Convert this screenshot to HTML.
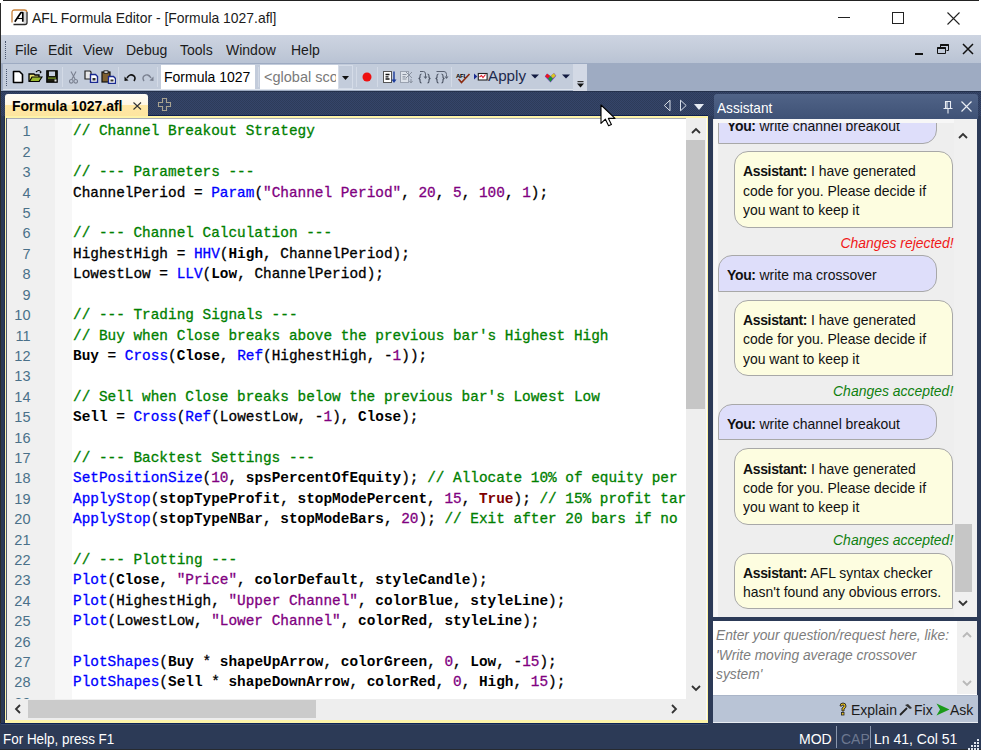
<!DOCTYPE html>
<html><head><meta charset="utf-8">
<style>
*{margin:0;padding:0;box-sizing:border-box}
html,body{width:981px;height:750px;overflow:hidden;background:#2c3a57;font-family:"Liberation Sans",sans-serif;font-size:14px;color:#1e1e1e}
.a{position:absolute}
#title{left:0;top:0;width:981px;height:35px;background:#fff}
#menu{left:1px;top:35px;width:980px;height:28px;background:linear-gradient(#cdd4e1,#c4ccda 50%,#b9c3d4)}
#tbband{left:1px;top:63px;width:980px;height:28px;background:#9eabc2}
#toolbar{left:3px;top:64px;width:584px;height:26px;background:#c3ccdb;border-bottom:1px solid #dde3ec}
#navytop{left:1px;top:91px;width:980px;height:25px;background-color:#2d3b59;
 background-image:conic-gradient(#35456a 25%,transparent 0 50%,#35456a 0 75%,transparent 0);background-size:2px 2px}
.mi{position:absolute;top:42px;font-size:14px;color:#1b1b1b;white-space:pre}
#tab{left:5px;top:94px;width:143px;height:23px;border-radius:3px 3px 0 0;background:linear-gradient(#fffdf6,#fff7e4 47%,#ffe7a3 49%,#fde5a0)}
#tabtxt{left:12px;top:98px;font-weight:bold;font-size:14px;color:#000;white-space:pre}
#frame{left:5px;top:116px;width:703px;height:607px;background:#fdf3a8}
#frameline{left:148px;top:115px;width:560px;height:1px;background:#0f2050}
#editor{left:7px;top:118px;width:699px;height:602px;background:#fff;overflow:hidden}
#gutter{left:0;top:0;width:48px;height:581px;background:#f0f0f0}
#margin{left:48px;top:0;width:17px;height:581px;background:#f7f7f7}
.ln{position:absolute;left:66px;font-family:"Liberation Mono",monospace;font-size:14.4px;white-space:pre;color:#000;line-height:20px;-webkit-text-stroke:0.3px currentColor}
.num{position:absolute;left:0;width:23.5px;text-align:right;font-size:14.5px;color:#4a7089;line-height:20px}
i{font-style:normal}
.sg{display:block;font-size:15px;transform:scaleX(0.93);transform-origin:0 0}
.sgr{display:block;font-size:15px;transform:scaleX(0.93);transform-origin:100% 0}
.bub b{letter-spacing:-0.35px}
#chatclip{left:0;top:4px;width:240.6px;height:493px;overflow:hidden}
i.c{color:#008000}
i.s{color:#800080}
i.n{color:#800080}
i.f{color:#0000ff}
i.b{font-weight:bold;-webkit-text-stroke:0}
i.t{font-weight:bold;color:#800000;-webkit-text-stroke:0}
#vscroll{left:679px;top:0;width:20px;height:581px;background:#eeeeee}
#vthumb{left:679px;top:22px;width:19px;height:269px;background:#c6c6c6}
#hscroll{left:0;top:581px;width:679px;height:21px;background:#eeeeee}
#hthumb{left:21px;top:582px;width:288px;height:18px;background:#cbcbcb}
#corner{left:679px;top:581px;width:20px;height:21px;background:#eeeeee}
#apanel{left:713.5px;top:94px;width:264.5px;height:25px;border-radius:3px 3px 0 0;background:linear-gradient(#506387,#3f5276)}
#chat{left:713px;top:119px;width:264px;height:498px;background:#eeeeee;overflow:hidden}
.bub{position:absolute;border:1px solid #a8a8a8;font-size:14px;color:#111;line-height:19.3px;white-space:pre}
.you{left:5px;width:219px;background:#dedefa;border-radius:14px 14px 14px 0;padding:8.7px 0 0 8px}
.ast{left:21px;width:219px;background:#fdfde0;border-radius:14px 14px 0 14px;padding:9.4px 0 0 8px}
.st{position:absolute;right:-0.5px;font-style:italic;font-size:14px}
#cscroll{left:240.6px;top:0;width:24px;height:498px;background:#f0f0f0}
#input{left:713px;top:621px;width:264px;height:74px;background:#fff}
#inscroll{left:244px;top:0;width:20px;height:73px;background:#f0f0f0}
#btnbar{left:713px;top:695px;width:265px;height:28px;background:#b9c4d6;border-bottom:1px solid #e8ecf2;border-top:1px solid #aab5c8}
#status{left:0;top:723px;width:981px;height:27px;background:#2c3a56}
.wt{color:#fff;white-space:pre}
</style></head><body>
<div id="title" class="a"></div>
<div class="a" style="left:3px;top:0;width:976px;height:1px;background:#222"></div>
<div class="a" style="left:0;top:3px;width:1px;height:747px;background:#2a2a2a"></div>
<!-- app icon -->
<svg class="a" style="left:11px;top:9px" width="17" height="17" viewBox="0 0 17 17">
 <rect x="1" y="1" width="15" height="15" rx="2.5" fill="#fff"/>
 <rect x="12.5" y="2.5" width="2.5" height="12" fill="#d8d8d8"/>
 <path d="M2.5 15.5h11.5q2 0 2-2V3" fill="none" stroke="#2a2a2a" stroke-width="1.3"/>
 <path d="M1 13.5V3.5q0-2.5 2.5-2.5h10q2 0 2.5 2" fill="none" stroke="#c8823c" stroke-width="1.3"/>
 <path d="M3.8 12.8L10 3.5h1.8v9.3" fill="none" stroke="#000" stroke-width="1.7" stroke-linejoin="round"/>
 <path d="M6.5 9.5h5" stroke="#000" stroke-width="1.1"/>
</svg>
<div class="a wt" style="left:32px;top:9px;color:#1b1b1b;font-size:15px;transform:scaleX(0.927);transform-origin:0 0">AFL Formula Editor - [Formula 1027.afl]</div>
<!-- window controls -->
<div class="a" style="left:838px;top:17px;width:12px;height:1px;background:#222"></div>
<div class="a" style="left:892px;top:12px;width:12px;height:12px;border:1px solid #222"></div>
<svg class="a" style="left:947px;top:12px" width="13" height="13" viewBox="0 0 13 13"><path d="M0.5 0.5L12.5 12.5M12.5 0.5L0.5 12.5" stroke="#222" stroke-width="1.1"/></svg>

<div id="menu" class="a"></div>
<div class="a" style="left:5px;top:41px;width:1px;height:18px;border-left:1px dotted #4a5670"></div>
<div class="mi" style="left:15px">File</div>
<div class="mi" style="left:48px">Edit</div>
<div class="mi" style="left:83px">View</div>
<div class="mi" style="left:126px">Debug</div>
<div class="mi" style="left:180px">Tools</div>
<div class="mi" style="left:226px">Window</div>
<div class="mi" style="left:291px">Help</div>
<!-- mdi controls -->
<div class="a" style="left:915px;top:53px;width:8px;height:2px;background:#111"></div>
<svg class="a" style="left:937px;top:44px" width="12" height="10" viewBox="0 0 12 10"><path d="M3.5 0.5h8v6h-2M0.5 3.5h8v6h-8z M3.5 0.5v3" fill="none" stroke="#111" stroke-width="1"/><path d="M0.5 4h8" stroke="#111" stroke-width="2"/><path d="M3.5 1h8" stroke="#111" stroke-width="2"/></svg>
<svg class="a" style="left:962px;top:43px" width="12" height="12" viewBox="0 0 12 12"><path d="M1 1L11 11M11 1L1 11" stroke="#111" stroke-width="1.5"/></svg>

<div id="tbband" class="a"></div>
<div id="toolbar" class="a"></div>
<div class="a" style="left:6px;top:69px;width:1px;height:17px;border-left:1px dotted #4a5670"></div>

<svg class="a" style="left:12px;top:70px" width="12" height="14" viewBox="0 0 12 14"><path d="M1.5 1.5h6l3 3v8h-9z" fill="#fff" stroke="#000" stroke-width="1.6" stroke-linejoin="round"/></svg>
<svg class="a" style="left:28px;top:69px" width="15" height="14" viewBox="0 0 15 14"><path d="M1 5h5l1 1h4v6H1z" fill="#e8e070" stroke="#000" stroke-width="1.3"/><path d="M1.5 12.5L4 8h10l-3 4.5z" fill="#9ab830" stroke="#000" stroke-width="1.2"/><path d="M8 3q3-3 5 0l-1 1" fill="none" stroke="#000" stroke-width="1.2"/></svg>
<svg class="a" style="left:46px;top:70px" width="12" height="13" viewBox="0 0 12 13"><rect x="0.8" y="0.8" width="10.4" height="11.4" fill="#1c1c10" stroke="#000" stroke-width="1.2"/><rect x="3" y="1.5" width="6" height="4.5" fill="#c8d0e0"/><rect x="2" y="7.5" width="8" height="1.2" fill="#7a9a20"/><rect x="8.5" y="9.5" width="2" height="2" fill="#ddd"/></svg>
<div class="a" style="left:62px;top:67px;width:1px;height:20px;background:#8d9ab0;border-right:1px solid #d3dae6"></div>
<svg class="a" style="left:69px;top:71px" width="9" height="13" viewBox="0 0 9 13"><path d="M2 0.5L6 8M7 0.5L3 8" stroke="#7a8090" stroke-width="1.1" fill="none"/><circle cx="2.3" cy="10.3" r="1.8" fill="none" stroke="#7a8090" stroke-width="1.1"/><circle cx="6.7" cy="10.3" r="1.8" fill="none" stroke="#7a8090" stroke-width="1.1"/></svg>
<svg class="a" style="left:84px;top:70px" width="15" height="13" viewBox="0 0 15 13"><path d="M1 1h5l1 1v7H1z" fill="#e8e8e8" stroke="#222" stroke-width="1.2"/><path d="M6.5 4.5h5l2 2v6h-7z" fill="#fff" stroke="#1a2a90" stroke-width="1.4"/><rect x="8.5" y="8" width="3" height="2.5" fill="#333"/></svg>
<svg class="a" style="left:101px;top:70px" width="15" height="14" viewBox="0 0 15 14"><rect x="1" y="2" width="8" height="10" fill="#806030" stroke="#111" stroke-width="1.2"/><rect x="3" y="0.8" width="4" height="2.5" fill="#ddd" stroke="#111" stroke-width="0.8"/><path d="M7.5 6.5h5l2 2v5h-7z" fill="#fff" stroke="#1a2a90" stroke-width="1.4"/><rect x="9.5" y="9.5" width="3" height="2" fill="#333"/></svg>
<div class="a" style="left:118px;top:67px;width:1px;height:20px;background:#8d9ab0;border-right:1px solid #d3dae6"></div>
<svg class="a" style="left:124px;top:73px" width="12" height="9" viewBox="0 0 12 9"><path d="M3 5q3-5 7-2q2 2 0 5" fill="none" stroke="#111" stroke-width="1.6"/><path d="M0.5 3.5L4.5 7.5L0.5 8z" fill="#111"/></svg>
<svg class="a" style="left:142px;top:73px" width="12" height="9" viewBox="0 0 12 9"><path d="M9 5q-3-5-7-2q-2 2 0 5" fill="none" stroke="#7a8090" stroke-width="1.4"/><path d="M11.5 3.5L7.5 7.5L11.5 8z" fill="#7a8090"/></svg>
<div class="a" style="left:157px;top:67px;width:1px;height:20px;background:#8d9ab0;border-right:1px solid #d3dae6"></div>
<div class="a" style="left:161px;top:65px;width:94px;height:24px;background:#fff"></div>
<div class="a" style="left:164px;top:69px;font-size:14px;color:#000;white-space:pre">Formula 1027</div>
<div class="a" style="left:258px;top:67px;width:1px;height:20px;background:#8d9ab0;border-right:1px solid #d3dae6"></div>
<div class="a" style="left:260px;top:65px;width:93px;height:24px;background:#fff"></div><div class="a" style="left:260px;top:65px;width:76px;height:24px;overflow:hidden"><div class="a" style="left:4px;top:4px;font-size:14.5px;color:#7a7a7a;white-space:pre">&lt;global scope&gt;</div></div>
<div class="a" style="left:338px;top:65px;width:15px;height:24px;background:#c3ccdb;border:1px solid #d5dce8"></div>
<svg class="a" style="left:341.5px;top:75.5px" width="7" height="4" viewBox="0 0 7 4"><path d="M0 0h7L3.5 4z" fill="#111"/></svg>
<div class="a" style="left:356px;top:67px;width:1px;height:20px;background:#8d9ab0;border-right:1px solid #d3dae6"></div>
<svg class="a" style="left:362px;top:72px" width="10" height="10" viewBox="0 0 10 10"><circle cx="5" cy="5" r="4.5" fill="#ee1010"/></svg>
<div class="a" style="left:377px;top:67px;width:1px;height:20px;background:#8d9ab0;border-right:1px solid #d3dae6"></div>
<svg class="a" style="left:382px;top:70px" width="15" height="14" viewBox="0 0 15 14"><rect x="1.5" y="1.5" width="8" height="11" fill="#fff" stroke="#555" stroke-width="1"/><path d="M3.5 4.5h4M3.5 6.8h3M3.5 9h4" stroke="#111" stroke-width="1.3"/><path d="M12 1.5v9" stroke="#1a3a9a" stroke-width="1.4"/><path d="M9.5 9.5h5L12 13z" fill="#1a3a9a"/></svg>
<svg class="a" style="left:399px;top:70px" width="15" height="14" viewBox="0 0 15 14"><rect x="1.5" y="1.5" width="8" height="11" fill="#dde2ea" stroke="#9aa2b0" stroke-width="1"/><path d="M3.5 4.5h4M3.5 6.8h3M3.5 9h4" stroke="#8a92a0" stroke-width="1.2"/><path d="M7 2l6 6M13 2L7 8M12 9v3M10.5 11l1.5 2l1.5-2" stroke="#8a92a0" stroke-width="1" fill="none"/></svg>
<svg class="a" style="left:418px;top:70px" width="13" height="14" viewBox="0 0 13 14"><path d="M3.5 4q-1.5 0-1.5 2v1.5l-1 1l1 1v1.5q0 2 1.5 2M9.5 4q1.5 0 1.5 2v1.5l1 1l-1 1v1.5q0 2-1.5 2" fill="none" stroke="#4a5262" stroke-width="1.1"/><path d="M2 1.5h3.5q2 0 2 2.5v3" fill="none" stroke="#5a6272" stroke-width="1"/><path d="M5.5 6.5h4l-2 2.5z" fill="#5a6272"/></svg>
<svg class="a" style="left:435px;top:70px" width="14" height="14" viewBox="0 0 14 14"><path d="M3.5 4q-1.5 0-1.5 2v1.5l-1 1l1 1v1.5q0 2 1.5 2M6.5 4q1.5 0 1.5 2v1.5l1 1l-1 1v1.5q0 2-1.5 2" fill="none" stroke="#4a5262" stroke-width="1.1"/><path d="M1.5 1.5h7.5q2.5 0 2.5 3v2" fill="none" stroke="#5a6272" stroke-width="1"/><path d="M9.5 6.5h4l-2 2.5z" fill="#5a6272"/></svg>
<div class="a" style="left:451px;top:67px;width:1px;height:20px;background:#8d9ab0;border-right:1px solid #d3dae6"></div>
<svg class="a" style="left:455px;top:71px" width="16" height="13" viewBox="0 0 16 13"><text x="1" y="6.5" font-family="Liberation Sans" font-size="6" font-weight="bold" fill="#000" letter-spacing="-0.3">AFL</text><path d="M3.5 8l3 3.5l8-8.5" fill="none" stroke="#8b2a10" stroke-width="1.6"/></svg>
<svg class="a" style="left:473px;top:72px" width="15" height="9" viewBox="0 0 15 9"><path d="M1 1.5L4.3 4.5L1 7.5z" fill="#1a2a90"/><rect x="5.3" y="1.5" width="8.8" height="6.5" fill="#fff" stroke="#222" stroke-width="1.1"/><path d="M6.5 5l2-1.5l1.5 2l2.5-3" fill="none" stroke="#e02030" stroke-width="1.1"/></svg>
<div class="a" style="left:488px;top:67px;font-size:15.2px;color:#1e2a4e;white-space:pre">Apply</div>
<svg class="a" style="left:531px;top:74px" width="8" height="5" viewBox="0 0 8 5"><path d="M0 0.5h8L4 4.5z" fill="#111a40"/></svg>
<svg class="a" style="left:544px;top:72px" width="13" height="11" viewBox="0 0 13 11"><path d="M6.5 10.5L0.8 4.5L3 1.5L6.5 4L10 1L12.3 3.8z" fill="#7040c0"/><path d="M1.2 4.3L3.2 1.8L6 4L4 6.5z" fill="#ee1818"/><path d="M6.8 3.8L9.8 1.3L11.8 3.7L8.8 6.3z" fill="#d8c820"/><path d="M4.3 6.8L8.5 6.6L6.5 9.8z" fill="#20a030"/><path d="M4.2 6.6L6.3 4.3L8.6 6.4L6.5 9.5z" fill="#1a9a2a"/></svg>
<svg class="a" style="left:562px;top:74px" width="8" height="5" viewBox="0 0 8 5"><path d="M0 0.5h8L4 4.5z" fill="#111a40"/></svg>
<div class="a" style="left:573px;top:64px;width:14px;height:27px;background:#d3d9e5"></div>
<svg class="a" style="left:577px;top:81px" width="7" height="7" viewBox="0 0 7 7"><rect x="0.5" y="0" width="6" height="1.2" fill="#333"/><path d="M0 2.5h7L3.5 6.5z" fill="#111"/></svg>


<div id="navytop" class="a"></div>
<div class="a" style="left:1px;top:91px;width:980px;height:1px;background:#24314c"></div>
<div class="a" style="left:1px;top:116px;width:712px;height:607px;background:#2c3a57"></div>
<div class="a" style="left:4px;top:116px;width:1px;height:607px;background:#1e2b48"></div>

<div id="tab" class="a"></div>
<div id="tabtxt" class="a">Formula 1027.afl</div>
<svg class="a" style="left:133px;top:102px" width="9" height="8" viewBox="0 0 9 8"><path d="M0.5 0.5L8 7.5M8 0.5L0.5 7.5" stroke="#333" stroke-width="1.1"/></svg>
<svg class="a" style="left:157px;top:97px" width="15" height="15" viewBox="0 0 15 15"><path d="M5.5 1.5h4v4h4v4h-4v4h-4v-4h-4v-4h4z" fill="none" stroke="#a8a290" stroke-width="1.1"/></svg>
<svg class="a" style="left:663px;top:99px" width="44" height="13" viewBox="0 0 44 13">
 <path d="M7 1.2L1.3 6.5L7 11.8Z" fill="none" stroke="#d9e0ea" stroke-width="1"/>
 <path d="M17.5 1.2L23.2 6.5L17.5 11.8Z" fill="none" stroke="#d9e0ea" stroke-width="1"/>
 <path d="M31 5h10L36 11Z" fill="#e6ebf3"/>
</svg>

<div id="frameline" class="a"></div>
<div id="frame" class="a"></div>
<div class="a" style="left:6px;top:118px;width:1px;height:602px;background:#4e5870"></div>
<div class="a" style="left:706px;top:118px;width:1px;height:602px;background:#fafafc"></div>
<div id="editor" class="a">
 <div id="gutter" class="a"></div>
 <div id="margin" class="a"></div>
 <div class="a" style="left:0;top:0;width:699px;height:1px;background:#a9aeb8"></div>
<div class="ln" style="top:3.40px"><i class="c">// Channel Breakout Strategy</i></div>
<div class="num" style="top:3.40px">1</div>
<div class="ln" style="top:23.81px"></div>
<div class="num" style="top:23.81px">2</div>
<div class="ln" style="top:44.22px"><i class="c">// --- Parameters ---</i></div>
<div class="num" style="top:44.22px">3</div>
<div class="ln" style="top:64.63px">ChannelPeriod = <i class="f">Param</i>(<i class="s">&quot;Channel Period&quot;</i>, <i class="n">20</i>, <i class="n">5</i>, <i class="n">100</i>, <i class="n">1</i>);</div>
<div class="num" style="top:64.63px">4</div>
<div class="ln" style="top:85.04px"></div>
<div class="num" style="top:85.04px">5</div>
<div class="ln" style="top:105.45px"><i class="c">// --- Channel Calculation ---</i></div>
<div class="num" style="top:105.45px">6</div>
<div class="ln" style="top:125.86px">HighestHigh = <i class="f">HHV</i>(<i class="b">High</i>, ChannelPeriod);</div>
<div class="num" style="top:125.86px">7</div>
<div class="ln" style="top:146.27px">LowestLow = <i class="f">LLV</i>(<i class="b">Low</i>, ChannelPeriod);</div>
<div class="num" style="top:146.27px">8</div>
<div class="ln" style="top:166.68px"></div>
<div class="num" style="top:166.68px">9</div>
<div class="ln" style="top:187.09px"><i class="c">// --- Trading Signals ---</i></div>
<div class="num" style="top:187.09px">10</div>
<div class="ln" style="top:207.50px"><i class="c">// Buy when Close breaks above the previous bar&#x27;s Highest High</i></div>
<div class="num" style="top:207.50px">11</div>
<div class="ln" style="top:227.91px"><i class="b">Buy</i> = <i class="f">Cross</i>(<i class="b">Close</i>, <i class="f">Ref</i>(HighestHigh, -<i class="n">1</i>));</div>
<div class="num" style="top:227.91px">12</div>
<div class="ln" style="top:248.32px"></div>
<div class="num" style="top:248.32px">13</div>
<div class="ln" style="top:268.73px"><i class="c">// Sell when Close breaks below the previous bar&#x27;s Lowest Low</i></div>
<div class="num" style="top:268.73px">14</div>
<div class="ln" style="top:289.14px"><i class="b">Sell</i> = <i class="f">Cross</i>(<i class="f">Ref</i>(LowestLow, -<i class="n">1</i>), <i class="b">Close</i>);</div>
<div class="num" style="top:289.14px">15</div>
<div class="ln" style="top:309.55px"></div>
<div class="num" style="top:309.55px">16</div>
<div class="ln" style="top:329.96px"><i class="c">// --- Backtest Settings ---</i></div>
<div class="num" style="top:329.96px">17</div>
<div class="ln" style="top:350.37px"><i class="f">SetPositionSize</i>(<i class="n">10</i>, <i class="b">spsPercentOfEquity</i>); <i class="c">// Allocate 10% of equity per</i></div>
<div class="num" style="top:350.37px">18</div>
<div class="ln" style="top:370.78px"><i class="f">ApplyStop</i>(<i class="b">stopTypeProfit</i>, <i class="b">stopModePercent</i>, <i class="n">15</i>, <i class="t">True</i>); <i class="c">// 15% profit tar</i></div>
<div class="num" style="top:370.78px">19</div>
<div class="ln" style="top:391.19px"><i class="f">ApplyStop</i>(<i class="b">stopTypeNBar</i>, <i class="b">stopModeBars</i>, <i class="n">20</i>); <i class="c">// Exit after 20 bars if no</i></div>
<div class="num" style="top:391.19px">20</div>
<div class="ln" style="top:411.60px"></div>
<div class="num" style="top:411.60px">21</div>
<div class="ln" style="top:432.01px"><i class="c">// --- Plotting ---</i></div>
<div class="num" style="top:432.01px">22</div>
<div class="ln" style="top:452.42px"><i class="f">Plot</i>(<i class="b">Close</i>, <i class="s">&quot;Price&quot;</i>, <i class="b">colorDefault</i>, <i class="b">styleCandle</i>);</div>
<div class="num" style="top:452.42px">23</div>
<div class="ln" style="top:472.83px"><i class="f">Plot</i>(HighestHigh, <i class="s">&quot;Upper Channel&quot;</i>, <i class="b">colorBlue</i>, <i class="b">styleLine</i>);</div>
<div class="num" style="top:472.83px">24</div>
<div class="ln" style="top:493.24px"><i class="f">Plot</i>(LowestLow, <i class="s">&quot;Lower Channel&quot;</i>, <i class="b">colorRed</i>, <i class="b">styleLine</i>);</div>
<div class="num" style="top:493.24px">25</div>
<div class="ln" style="top:513.65px"></div>
<div class="num" style="top:513.65px">26</div>
<div class="ln" style="top:534.06px"><i class="f">PlotShapes</i>(<i class="b">Buy</i> * <i class="b">shapeUpArrow</i>, <i class="b">colorGreen</i>, <i class="n">0</i>, <i class="b">Low</i>, -<i class="n">15</i>);</div>
<div class="num" style="top:534.06px">27</div>
<div class="ln" style="top:554.47px"><i class="f">PlotShapes</i>(<i class="b">Sell</i> * <i class="b">shapeDownArrow</i>, <i class="b">colorRed</i>, <i class="n">0</i>, <i class="b">High</i>, <i class="n">15</i>);</div>
<div class="num" style="top:554.47px">28</div>
<div class="ln" style="top:574.88px"></div>
<div class="num" style="top:574.88px">29</div>
 <div id="vscroll" class="a"></div>
 <div id="vthumb" class="a"></div>
 <svg class="a" style="left:684px;top:9px" width="10" height="7" viewBox="0 0 10 7"><path d="M1 6L5 2L9 6" fill="none" stroke="#333" stroke-width="1.8"/></svg>
 <svg class="a" style="left:684px;top:567px" width="10" height="7" viewBox="0 0 10 7"><path d="M1 1L5 5L9 1" fill="none" stroke="#333" stroke-width="1.8"/></svg>
 <div id="hscroll" class="a"></div>
 <div id="hthumb" class="a"></div>
 <svg class="a" style="left:7px;top:586px" width="7" height="10" viewBox="0 0 7 10"><path d="M6 1L2 5L6 9" fill="none" stroke="#333" stroke-width="1.8"/></svg>
 <svg class="a" style="left:664px;top:586px" width="7" height="10" viewBox="0 0 7 10"><path d="M1 1L5 5L1 9" fill="none" stroke="#333" stroke-width="1.8"/></svg>
 <div id="corner" class="a"></div>
</div>

<div id="apanel" class="a"></div>
<div class="a wt" style="left:717px;top:100px;font-size:14.5px;transform:scaleX(0.94);transform-origin:0 0">Assistant</div>
<svg class="a" style="left:943px;top:100px" width="10" height="14" viewBox="0 0 10 14"><path d="M2.5 1.5h5v7h-5zM0.5 8.5h9M5 8.5v5M4 1.5v7" fill="none" stroke="#e8ecf3" stroke-width="1.1"/></svg>
<svg class="a" style="left:961px;top:101px" width="11" height="11" viewBox="0 0 11 11"><path d="M0.5 0.5L10.5 10.5M10.5 0.5L0.5 10.5" stroke="#e8ecf3" stroke-width="1.2"/></svg>
<div id="chat" class="a">
<div id="chatclip" class="a"><div class="a" style="left:0;top:-4px;width:240px;height:497px">
<div class="bub you" style="top:-11px;height:36.3px;padding-top:7px"><span class="sg"><b>You:</b> write channel breakout</span></div>
<div class="bub ast" style="top:32.0px;height:76.8px"><span class="sg"><b>Assistant:</b> I have generated
code for you. Please decide if
you want to keep it</span></div>
<div class="st" style="top:113.6px;color:#f01818;line-height:19.5px"><span class="sgr">Changes rejected!</span></div>
<div class="bub you" style="top:136.3px;height:36.3px"><span class="sg"><b>You:</b> write ma crossover</span></div>
<div class="bub ast" style="top:180.6px;height:76.8px"><span class="sg"><b>Assistant:</b> I have generated
code for you. Please decide if
you want to keep it</span></div>
<div class="st" style="top:262.2px;color:#0f800f;line-height:19.5px"><span class="sgr">Changes accepted!</span></div>
<div class="bub you" style="top:284.9px;height:36.3px"><span class="sg"><b>You:</b> write channel breakout</span></div>
<div class="bub ast" style="top:329.2px;height:76.8px"><span class="sg"><b>Assistant:</b> I have generated
code for you. Please decide if
you want to keep it</span></div>
<div class="st" style="top:410.8px;color:#0f800f;line-height:19.5px"><span class="sgr">Changes accepted!</span></div>
<div class="bub ast" style="top:433.7px;height:56.6px"><span class="sg"><b>Assistant:</b> AFL syntax checker
hasn't found any obvious errors.</span></div>
</div></div>
<div id="cscroll" class="a"></div>
<div class="a" style="left:241.5px;top:405px;width:17.5px;height:67.5px;background:#c6c6c6"></div>
<svg class="a" style="left:245px;top:13px" width="10" height="7" viewBox="0 0 10 7"><path d="M1 6L5 2L9 6" fill="none" stroke="#333" stroke-width="1.8"/></svg>
<svg class="a" style="left:245px;top:481px" width="10" height="7" viewBox="0 0 10 7"><path d="M1 1L5 5L9 1" fill="none" stroke="#333" stroke-width="1.8"/></svg>
</div>

<div class="a" style="left:713.5px;top:119px;width:240px;height:3.5px;background:#f7f7f7"></div>
<div class="a" style="left:713.5px;top:119px;width:4px;height:498px;background:#f7f7f7"></div>
<div id="input" class="a">
 <div class="a" style="left:2.5px;top:5px;font-style:italic;color:#7d7d7d;line-height:19.7px;white-space:pre;font-size:14px;transform:scaleX(0.985);transform-origin:0 0">Enter your question/request here, like:
'Write moving average crossover
system'</div>
 <div id="inscroll" class="a"></div>
 <svg class="a" style="left:249px;top:10px" width="10" height="7" viewBox="0 0 10 7"><path d="M1 6L5 2L9 6" fill="none" stroke="#b8b8b8" stroke-width="1.9"/></svg>
 <svg class="a" style="left:249px;top:59px" width="10" height="7" viewBox="0 0 10 7"><path d="M1 1L5 5L9 1" fill="none" stroke="#b8b8b8" stroke-width="1.9"/></svg>
</div>
<div id="btnbar" class="a"></div>

<svg class="a" style="left:838px;top:702px" width="9" height="14" viewBox="0 0 9 14"><path d="M2 4q0-3 3-3t3 3q0 2-2 3v2h-2v-3q2-1 2-2t-1-1q-1 0-1 1z" fill="#e8c020" stroke="#222" stroke-width="0.9"/><rect x="3.5" y="10.5" width="2.5" height="2.5" fill="#e8c020" stroke="#222" stroke-width="0.8"/></svg>
<div class="a" style="left:851px;top:702px;font-size:14px;color:#1b1b1b;white-space:pre">Explain</div>
<svg class="a" style="left:899px;top:703px" width="14" height="13" viewBox="0 0 14 13"><path d="M1 12L8 5" stroke="#222" stroke-width="1.8"/><path d="M6 2l3-1l4 4l-2 1z" fill="#333"/></svg>
<div class="a" style="left:914px;top:702px;font-size:14px;color:#1b1b1b;white-space:pre">Fix</div>
<svg class="a" style="left:936px;top:703px" width="14" height="13" viewBox="0 0 14 13"><path d="M0.5 0.5L13.5 6.5L0.5 12.5L4 6.5z" fill="#1a9a1a"/></svg>
<div class="a" style="left:950px;top:702px;font-size:14px;color:#1b1b1b;white-space:pre">Ask</div>


<div id="status" class="a"></div>
<div class="a" style="left:1px;top:723px;width:707px;height:1px;background:#0e2354"></div>
<div class="a" style="left:1px;top:724px;width:707px;height:1px;background:#3a4968"></div>
<div class="a" style="left:0;top:749px;width:981px;height:1px;background:#262a30"></div>
<div class="a wt" style="left:3px;top:731px;font-size:14px;transform:scaleX(0.96);transform-origin:0 0">For Help, press F1</div>
<div class="a wt" style="left:799px;top:731px;font-size:14px">MOD</div>
<div class="a" style="left:836px;top:726px;width:1px;height:22px;background:#8a96ac"></div>
<div class="a wt" style="left:841px;top:731px;font-size:14px;color:#6c7890">CAP</div>
<div class="a" style="left:870px;top:726px;width:1px;height:22px;background:#8a96ac"></div>
<div class="a wt" style="left:874px;top:731px;font-size:14px">Ln 41, Col 51</div>
<svg class="a" style="left:968px;top:738px" width="12" height="12" viewBox="0 0 12 12" fill="#dfe4ee">
 <rect x="9" y="1" width="2" height="2"/><rect x="6" y="4" width="2" height="2"/><rect x="9" y="4" width="2" height="2"/>
 <rect x="3" y="7" width="2" height="2"/><rect x="6" y="7" width="2" height="2"/><rect x="9" y="7" width="2" height="2"/>
 <rect x="0" y="10" width="2" height="2"/><rect x="3" y="10" width="2" height="2"/><rect x="6" y="10" width="2" height="2"/><rect x="9" y="10" width="2" height="2"/>
</svg>
<svg class="a" style="left:600.2px;top:104.4px" width="18" height="24" viewBox="0 0 18 24"><path d="M1 1V19.4L5.4 15.2L8.6 21.8L11.4 20.6L8.4 14.4H15Z" fill="#fff" stroke="#000" stroke-width="1.1" stroke-linejoin="round"/></svg>
</body></html>
